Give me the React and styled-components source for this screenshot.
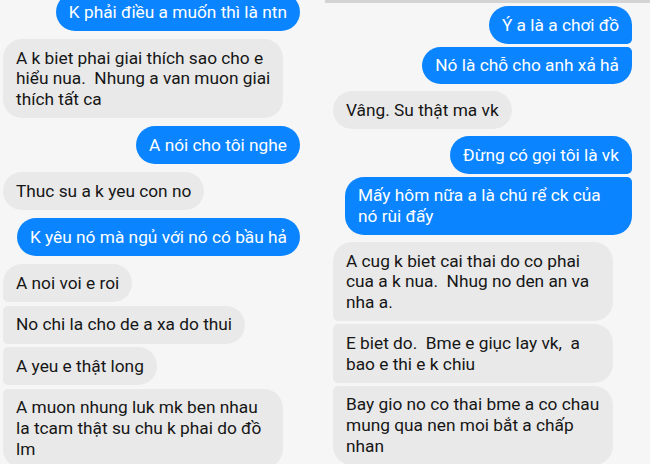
import React from "react";
import styled, { createGlobalStyle, css } from "styled-components";

const Global = createGlobalStyle`
  html, body { margin: 0; padding: 0; background: #ffffff; }
  body { font-family: Roboto, "Noto Sans", "Liberation Sans", sans-serif; }
`;

const Page = styled.div`
  display: grid;
  grid-template-columns: 325px 325px;
  width: 650px;
  height: 464px;
  overflow: hidden;
`;

const Panel = styled.div`
  display: flex;
  flex-direction: column;
  background: #f6f6f6;
  overflow: hidden;
  ${(p) =>
    p.$side === "left"
      ? css`
          padding: 0 25px 0 3px;
        `
      : css`
          padding: 3px 18px 0 8px;
          border-top: 3px solid #d4d4d4;
        `}
`;

const R = 19;
const r = 5;

const radii = (me, pos) => {
  const top = pos === "single" || pos === "first" ? R : r;
  const bottom = pos === "single" || pos === "last" ? R : r;
  return me
    ? `${R}px ${top}px ${bottom}px ${R}px`
    : `${top}px ${R}px ${R}px ${bottom}px`;
};

const Bubble = styled.div`
  flex: none;
  box-sizing: border-box;
  align-self: ${(p) => (p.$me ? "flex-end" : "flex-start")};
  margin-top: ${(p) => p.$gap}px;
  padding: ${(p) => p.$padY}px 13px;
  font-size: 17.3px;
  line-height: 20.7px;
  white-space: pre;
  color: ${(p) => (p.$me ? "#ffffff" : "#161616")};
  background: ${(p) => (p.$me ? "#0a84ff" : "#e9e9e9")};
  border-radius: ${(p) => radii(p.$me, p.$pos)};
  width: ${(p) => (p.$w ? `${p.$w}px` : "auto")};
`;

const left = [
  { me: true, text: "K phải điều a muốn thì là ntn" },
  {
    me: false,
    w: 280,
    text: "A k biet phai giai thích sao cho e\nhiểu nua.  Nhung a van muon giai\nthích tất ca",
  },
  { me: true, text: "A nói cho tôi nghe" },
  { me: false, text: "Thuc su a k yeu con no" },
  { me: true, text: "K yêu nó mà ngủ với nó có bầu hả" },
  { me: false, text: "A noi voi e roi" },
  { me: false, text: "No chi la cho de a xa do thui" },
  { me: false, text: "A yeu e thật long" },
  {
    me: false,
    w: 280,
    text: "A muon nhung luk mk ben nhau\nla tcam thật su chu k phai do đồ\nlm",
  },
];

const right = [
  { me: true, text: "Ý a là a chơi đồ" },
  { me: true, text: "Nó là chỗ cho anh xả hả" },
  { me: false, text: "Vâng. Su thật ma vk" },
  { me: true, text: "Đừng có gọi tôi là vk" },
  { me: true, w: 287, text: "Mấy hôm nữa a là chú rể ck của\nnó rùi đấy" },
  {
    me: false,
    w: 280,
    text: "A cug k biet cai thai do co phai\ncua a k nua.  Nhug no den an va\nnha a.",
  },
  { me: false, w: 280, text: "E biet do.  Bme e giục lay vk,  a\nbao e thi e k chiu" },
  {
    me: false,
    w: 280,
    text: "Bay gio no co thai bme a co chau\nmung qua nen moi bắt a chấp\nnhan",
  },
];

function Thread({ items, side, firstGap, groupGap, senderGap, padY }) {
  return (
    <Panel $side={side}>
      {items.map((m, i) => {
        const prev = items[i - 1];
        const next = items[i + 1];
        const samePrev = prev && prev.me === m.me;
        const sameNext = next && next.me === m.me;
        const pos = samePrev
          ? sameNext
            ? "middle"
            : "last"
          : sameNext
          ? "first"
          : "single";
        const gap = i === 0 ? firstGap : samePrev ? groupGap : senderGap;
        return (
          <Bubble
            key={i}
            $me={m.me}
            $pos={pos}
            $gap={gap}
            $w={m.w}
            $padY={padY}
          >
            {m.text}
          </Bubble>
        );
      })}
    </Panel>
  );
}

export default function App() {
  return (
    <>
      <Global />
      <Page>
        <Thread
          items={left}
          side="left"
          firstGap={-7}
          groupGap={3.5}
          senderGap={8}
          padY={8.65}
        />
        <Thread
          items={right}
          side="right"
          firstGap={0}
          groupGap={3}
          senderGap={7}
          padY={8.5}
        />
      </Page>
    </>
  );
}
